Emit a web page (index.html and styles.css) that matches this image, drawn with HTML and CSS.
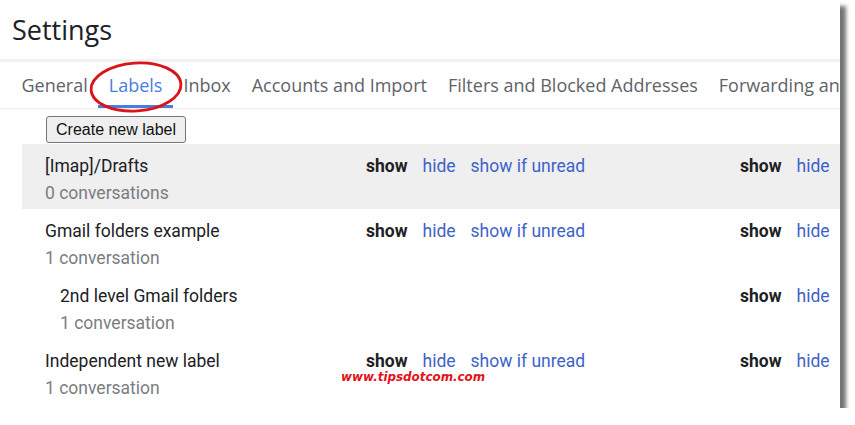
FILE: index.html
```html
<!DOCTYPE html>
<html lang="en">
<head>
    <meta charset="UTF-8">
    <title>Settings - Labels</title>
    <link rel="stylesheet" href="styles.css">
</head>
<body>
<div class="page">
    <div class="title">Settings</div>
    <div class="tabs">
        <span class="tab">General</span>
        <span class="tab active">Labels</span>
        <span class="tab">Inbox</span>
        <span class="tab">Accounts and Import</span>
        <span class="tab">Filters and Blocked Addresses</span>
        <span class="tab">Forwarding and POP/IMAP</span>
    </div>
    <div class="toolbar">
        <button class="btn">Create new label</button>
    </div>
    <div class="labels">
        <div class="row shaded">
            <div class="name">
                <div class="label">[Imap]/Drafts</div>
                <div class="count">0 conversations</div>
            </div>
            <div class="actions"><b>show</b><a>hide</a><a>show if unread</a></div>
            <div class="actions"><b>show</b><a>hide</a></div>
        </div>
        <div class="row">
            <div class="name">
                <div class="label">Gmail folders example</div>
                <div class="count">1 conversation</div>
            </div>
            <div class="actions"><b>show</b><a>hide</a><a>show if unread</a></div>
            <div class="actions"><b>show</b><a>hide</a></div>
        </div>
        <div class="row">
            <div class="name sub">
                <div class="label">2nd level Gmail folders</div>
                <div class="count">1 conversation</div>
            </div>
            <div class="actions"></div>
            <div class="actions"><b>show</b><a>hide</a></div>
        </div>
        <div class="row">
            <div class="name">
                <div class="label">Independent new label</div>
                <div class="count">1 conversation</div>
            </div>
            <div class="actions"><b>show</b><a>hide</a><a>show if unread</a></div>
            <div class="actions"><b>show</b><a>hide</a></div>
        </div>
    </div>

    <!-- red circle around the Labels tab -->
    <svg class="circle" width="100" height="58" viewBox="0 0 100 58">
        <ellipse cx="49" cy="28" rx="45" ry="24" transform="rotate(-4 49 28)" fill="none" stroke="#d9141b" stroke-width="2.8"/>
    </svg>
    <div class="mark">www.tipsdotcom.com</div>
</div>
</body>
</html>
```

FILE: styles.css
```css
*{
    margin: 0;
    padding: 0;
    box-sizing: border-box;
}
body{
    background: #fff;
}
.page{
    width: 840px;
    height: 408px;
    position: relative;
    overflow: hidden;
    background: #fff;
    box-shadow: 6px 6px 4px rgba(0,0,0,0.55);
}
.title{
    height: 59px;
    line-height: 59px;
    padding-left: 12px;
    font-family: "Open Sans", sans-serif;
    font-size: 27px;
    color: #202124;
}
.tabs{
    display: flex;
    white-space: nowrap;
    padding-left: 11px;
    border-top: 3px solid #f1f1f1;
    border-bottom: 1px solid #ececec;
    font-family: "Open Sans", sans-serif;
    font-size: 18px;
    color: #5f6368;
}
.tab{
    height: 46px;
    line-height: 46px;
    padding: 0 10.5px;
}
.tab.active{
    color: #4a7de0;
    box-shadow: inset 0 -3px 0 #4a7de0;
}
.toolbar{
    padding: 7px 0 1px 46px;
}
.btn{
    height: 27px;
    padding: 0 9px;
    font-family: "Liberation Sans", Arial, sans-serif;
    font-size: 16px;
    color: #111;
    background: #efefef;
    border: 1px solid #767676;
    border-radius: 3px;
}
.labels{
    margin-left: 22px;
    font-family: Roboto, sans-serif;
    font-size: 17.5px;
}
.row{
    display: grid;
    grid-template-columns: 344px 374px 1fr;
    height: 65px;
    padding-top: 9px;
    line-height: 27px;
}
.row.shaded{
    background: #efefef;
}
.name{
    padding-left: 23px;
}
.name.sub{
    padding-left: 38px;
}
.label{
    color: #202124;
}
.count{
    color: #7a7d80;
}
.actions{
    display: flex;
    gap: 15px;
}
.actions b{
    color: #202124;
}
.actions a{
    color: #3d63c8;
}
.circle{
    position: absolute;
    left: 87px;
    top: 59px;
}
.mark{
    position: absolute;
    left: 341px;
    top: 370px;
    font-family: "DejaVu Sans", sans-serif;
    font-size: 11.9px;
    font-weight: bold;
    font-style: italic;
    color: #e3121c;
}
```
